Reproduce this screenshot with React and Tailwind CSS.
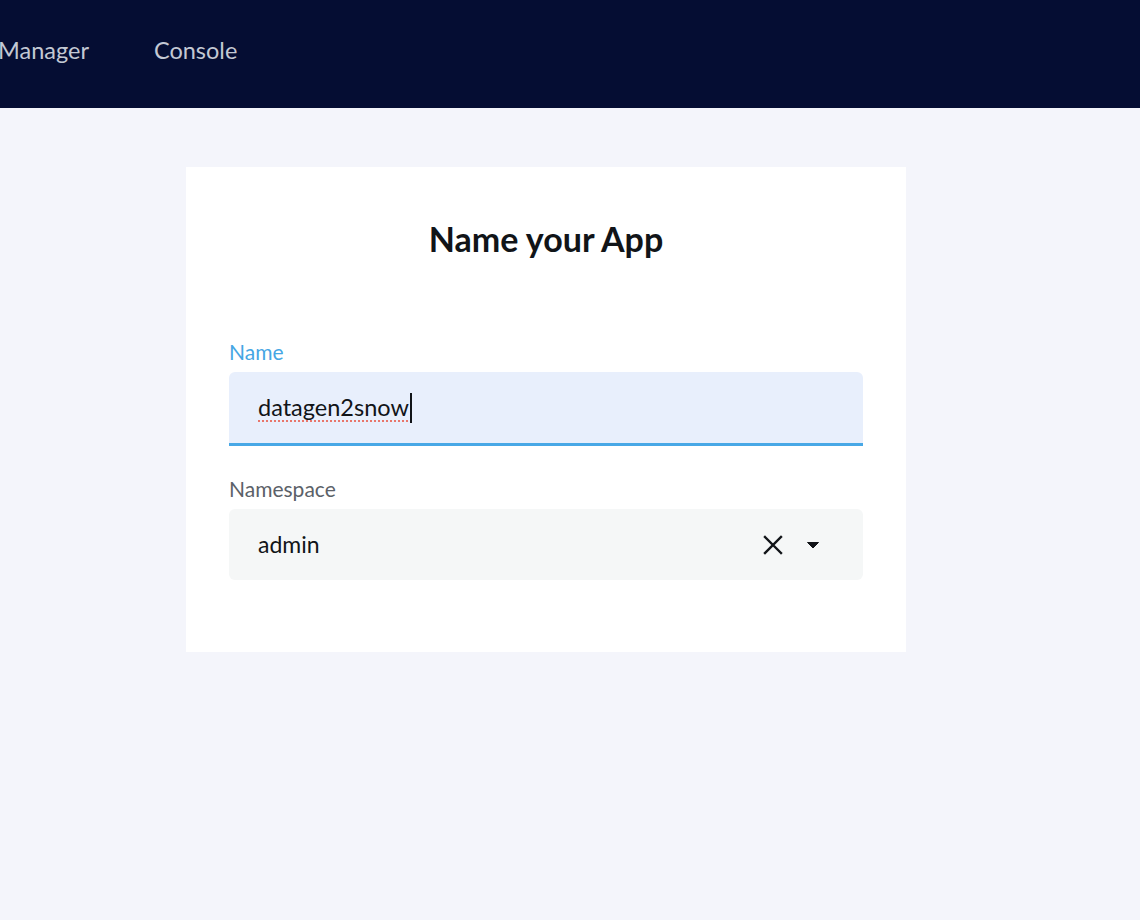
import React from "react";

function ClearIcon() {
  return (
    <svg width="22" height="22" viewBox="0 0 22 22" fill="none">
      <path d="M3 3L19 19M19 3L3 19" stroke="#111418" strokeWidth="2.4" strokeLinecap="square" />
    </svg>
  );
}

function CaretIcon() {
  return (
    <svg width="14" height="10" viewBox="0 0 14 10">
      <path d="M1.5 2.5H12.5L7 8Z" fill="#111418" stroke="#111418" strokeWidth="1" strokeLinejoin="round" />
    </svg>
  );
}

export default function App() {
  return (
    <div
      className="min-h-screen bg-[#f4f5fb]"
      style={{ fontFamily: "'Source Sans Pro', 'Lato', 'Noto Sans', sans-serif" }}
    >
      {/* Top nav */}
      <div className="h-[108px] bg-[#050d33] flex items-center">
        <div className="flex items-center gap-[65px] -ml-[2px] -mt-[6px] text-[23.5px] text-[#c3c8d4]">
          <span>Manager</span>
          <span>Console</span>
        </div>
      </div>

      {/* Card */}
      <div className="pt-[59px]">
        <div className="ml-[186px] w-[720px] bg-white px-[43px] pt-[52px] pb-[72px]">
          <h1 className="text-center text-[34px] font-bold text-[#111418] leading-[40px]">
            Name your App
          </h1>

          <div className="mt-[80px]">
            <label className="block text-[21px] text-[#45a6e4] leading-[26px]">Name</label>
            <div className="mt-[7px] h-[74px] bg-[#e8effc] rounded-t-[6px] border-b-[3px] border-[#48a8e6] flex items-center px-[29px]">
              <span className="text-[23.5px] text-[#111418] underline decoration-dotted decoration-2 decoration-[#e8766b] underline-offset-[5px]">
                datagen2snow
              </span>
              <span className="ml-[1px] w-[2px] h-[30px] bg-[#111418]" />
            </div>
          </div>

          <div className="mt-[30px]">
            <label className="block text-[21px] text-[#5b6168] leading-[26px]">Namespace</label>
            <div className="mt-[7px] h-[71px] bg-[#f5f7f7] rounded-[6px] flex items-center pl-[29px] pr-[43px]">
              <span className="flex-1 text-[23px] text-[#111418]">admin</span>
              <div className="flex items-center gap-[22px]">
                <ClearIcon />
                <CaretIcon />
              </div>
            </div>
          </div>
        </div>
      </div>
    </div>
  );
}
